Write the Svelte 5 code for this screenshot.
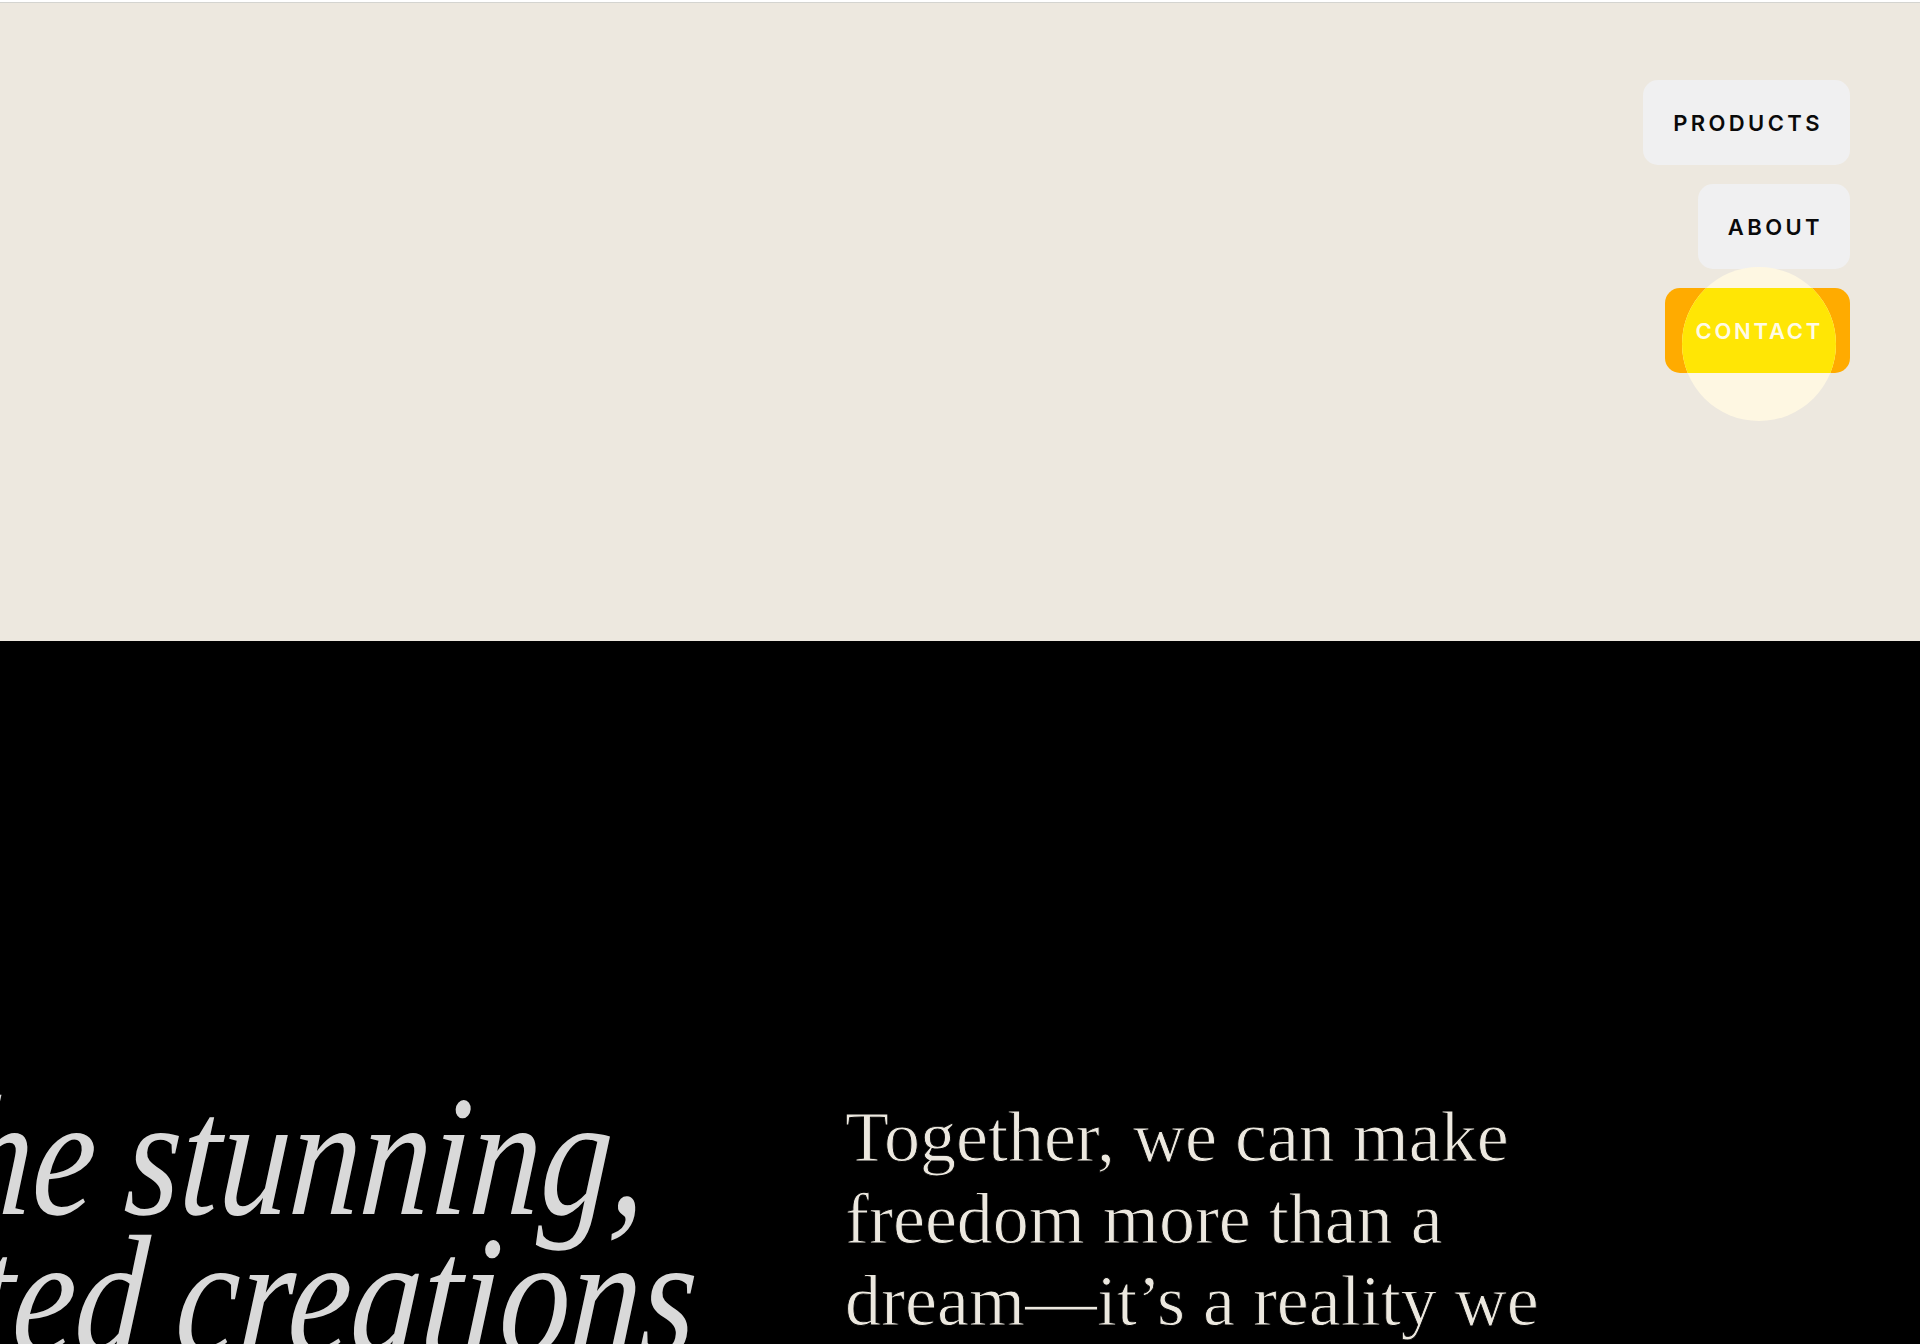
<script>
	const navItems = [
		{ label: 'PRODUCTS', active: false },
		{ label: 'ABOUT', active: false },
		{ label: 'CONTACT', active: true }
	];
</script>

<div class="page">
	<div class="top-rule"></div>
	<section class="hero">
		<nav class="nav">
			{#each navItems as item}
				<a class="nav-link" class:active={item.active} href="#top">
					{#if item.active}
						<span class="spot"></span>
					{/if}
					<span class="nav-label">{item.label}</span>
				</a>
			{/each}
		</nav>
	</section>
	<section class="statement">
		<h1 class="headline">
			<span class="line first">the stunning,</span>
			<span class="line second">crafted creations</span>
		</h1>
		<p class="lede">Together, we can make<br />freedom more than a<br />dream—it’s a reality we</p>
	</section>
</div>

<style>
	:global(body) {
		margin: 0;
		background: #000;
	}

	.page {
		height: 1344px;
		overflow: hidden;
		display: flex;
		flex-direction: column;
	}

	.top-rule {
		flex: none;
		height: 3px;
		background: linear-gradient(#fff 0 2px, #d4d4d0 2px);
	}

	.hero {
		flex: none;
		height: 638px;
		background: #ede8df;
		box-sizing: border-box;
		padding: 77px 70px 0 0;
	}

	.nav {
		display: flex;
		flex-direction: column;
		align-items: flex-end;
		gap: 19px;
	}

	.nav-link {
		position: relative;
		height: 85px;
		padding: 1px 27px 0 30px;
		display: flex;
		align-items: center;
		box-sizing: border-box;
		border-radius: 15px;
		background: #f0f0f1;
		color: #0a0a0a;
		font-family: Inter, 'Liberation Sans', sans-serif;
		font-size: 22px;
		font-weight: 600;
		letter-spacing: 0.155em;
		text-decoration: none;
	}

	.nav-link.active {
		background: #ffab00;
		color: #fffbe6;
		letter-spacing: 0.125em;
		isolation: isolate;
	}

	.nav-label {
		position: relative;
		z-index: 2;
	}

	/* cream disc outside the button, yellow where it crosses it */
	.spot {
		position: absolute;
		right: 14px;
		top: -21px;
		width: 154px;
		height: 154px;
		border-radius: 50%;
		background: #fef7e2;
	}

	.spot::after {
		content: '';
		position: absolute;
		inset: 0;
		border-radius: 50%;
		background: #ffe605;
		clip-path: inset(21px 0 48px 0);
	}

	.statement {
		flex: 1;
		background: #000;
		display: flex;
		padding-top: 445px;
	}

	.headline {
		flex: 0 0 712px;
		min-width: 0;
		display: flex;
		flex-direction: column;
		align-items: flex-end;
		margin: 0;
		font-family: 'Liberation Serif', serif;
		font-style: italic;
		font-weight: 400;
		font-size: 172px;
		line-height: 140px;
		word-spacing: -6px;
		color: #d9d9d9;
		white-space: nowrap;
		transform-origin: right top;
		transform: scaleX(0.82) skewX(-5deg);
	}

	.line {
		display: block;
	}

	.first {
		margin-right: 72px;
	}

	.lede {
		flex: none;
		margin: 10px 0 0 133px;
		font-family: 'Liberation Serif', serif;
		font-size: 72px;
		line-height: 82px;
		color: #ece8df;
		white-space: nowrap;
		-webkit-text-stroke: 0.9px #000;
	}
</style>
